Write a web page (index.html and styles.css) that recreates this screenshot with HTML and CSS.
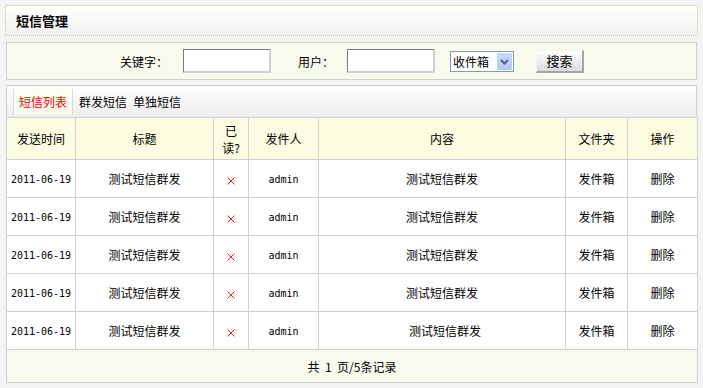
FILE: index.html
```html
<!DOCTYPE html>
<html>
<head>
<meta charset="utf-8">
<link rel="stylesheet" href="styles.css">
</head>
<body>
<div class="title">短信管理</div>
<div class="search">
  <span class="label">关键字：</span>
  <span class="input"></span>
  <span class="label user">用户：</span>
  <span class="input"></span>
  <span class="select"><span class="sel-text">收件箱</span><span class="sel-btn"><svg width="9" height="6" viewBox="0 0 9 6"><path d="M1 1 L4.5 4.5 L8 1" fill="none" stroke="#4d6185" stroke-width="2"/></svg></span></span>
  <span class="btn">搜索</span>
</div>
<div class="tabs">
  <span class="tab active">短信列表</span>
  <span class="tab">群发短信</span>
  <span class="tab">单独短信</span>
</div>
<table class="grid">
  <colgroup>
    <col class="c1"><col class="c2"><col class="c3"><col class="c4"><col class="c5"><col class="c6"><col class="c7">
  </colgroup>
  <thead>
    <tr><th>发送时间</th><th>标题</th><th>已<br>读?</th><th>发件人</th><th>内容</th><th>文件夹</th><th>操作</th></tr>
  </thead>
  <tbody>
    <tr><td class="mono">2011-06-19</td><td>测试短信群发</td><td><svg class="x" width="8" height="8" viewBox="0 0 8 8"><path d="M0.5 0.5 L7.5 7.5 M7.5 0.5 L0.5 7.5" stroke="#ff0000" stroke-width="0.9"/></svg></td><td class="mono">admin</td><td>测试短信群发</td><td>发件箱</td><td>删除</td></tr>
    <tr><td class="mono">2011-06-19</td><td>测试短信群发</td><td><svg class="x" width="8" height="8" viewBox="0 0 8 8"><path d="M0.5 0.5 L7.5 7.5 M7.5 0.5 L0.5 7.5" stroke="#ff0000" stroke-width="0.9"/></svg></td><td class="mono">admin</td><td>测试短信群发</td><td>发件箱</td><td>删除</td></tr>
    <tr><td class="mono">2011-06-19</td><td>测试短信群发</td><td><svg class="x" width="8" height="8" viewBox="0 0 8 8"><path d="M0.5 0.5 L7.5 7.5 M7.5 0.5 L0.5 7.5" stroke="#ff0000" stroke-width="0.9"/></svg></td><td class="mono">admin</td><td>测试短信群发</td><td>发件箱</td><td>删除</td></tr>
    <tr><td class="mono">2011-06-19</td><td>测试短信群发</td><td><svg class="x" width="8" height="8" viewBox="0 0 8 8"><path d="M0.5 0.5 L7.5 7.5 M7.5 0.5 L0.5 7.5" stroke="#ff0000" stroke-width="0.9"/></svg></td><td class="mono">admin</td><td>测试短信群发</td><td>发件箱</td><td>删除</td></tr>
    <tr><td class="mono">2011-06-19</td><td>测试短信群发</td><td><svg class="x" width="8" height="8" viewBox="0 0 8 8"><path d="M0.5 0.5 L7.5 7.5 M7.5 0.5 L0.5 7.5" stroke="#ff0000" stroke-width="0.9"/></svg></td><td class="mono">admin</td><td class="shift">测试短信群发</td><td>发件箱</td><td>删除</td></tr>
  </tbody>
  <tfoot>
    <tr><td colspan="7">共&nbsp;&nbsp;1&nbsp;&nbsp;页/5条记录</td></tr>
  </tfoot>
</table>
</body>
</html>
```
FILE: styles.css
```css
html, body {
  margin: 0;
  padding: 0;
  background: #f4f4f4;
}
body {
  padding-top: 5px;
  font-family: "Noto Sans CJK SC", "Liberation Sans", sans-serif;
  font-size: 12px;
  color: #000;
}
.title {
  margin: 0 5px;
  height: 29px;
  line-height: 29px;
  border: 1px dotted #c3cf7a;
  background: linear-gradient(#ffffff, #f0f0f0);
  padding-left: 10px;
  font-size: 13px;
  font-weight: bold;
}
.search {
  margin: 6px 6px 0;
  height: 36px;
  border: 1px solid #cfcfcf;
  background: #f9faee;
  display: flex;
  align-items: center;
  padding-left: 113px;
}
.label {
  width: 63px;
}
.label.user {
  margin-left: 27px;
  width: 49px;
}
.input {
  width: 85px;
  height: 21px;
  background: #fff;
  border-style: solid;
  border-width: 1px 2px 2px 1px;
  border-color: #7a7a7a #d0d0d0 #d0d0d0 #7a7a7a;
  box-sizing: content-box;
}
.select {
  margin-left: 15px;
  width: 60px;
  height: 19px;
  border: 1px solid #7f9db9;
  background: #fff;
  display: flex;
  align-items: center;
  justify-content: space-between;
  padding-left: 2px;
  box-sizing: content-box;
  margin-top: 1px;
}
.sel-text {
  line-height: 19px;
}
.sel-btn {
  width: 15px;
  height: 17px;
  margin-right: 1px;
  background: linear-gradient(#c9d8fc, #b0c6f6);
  border-radius: 1px;
  display: flex;
  align-items: center;
  justify-content: center;
}
.btn {
  margin-left: 22px;
  width: 45px;
  height: 20px;
  line-height: 20px;
  text-align: center;
  background: linear-gradient(#ffffff, #dcdcdc);
  border-style: solid;
  border-width: 1px 2px 2px 1px;
  border-color: #f4f4f4 #a5a5a5 #a5a5a5 #f4f4f4;
  font-size: 13px;
}
.tabs {
  margin: 5px 6px 0;
  height: 31px;
  border: 1px solid #cfcfcf;
  border-bottom: none;
  background: linear-gradient(#ffffff, #ededed);
  display: flex;
  align-items: flex-start;
  padding-left: 6px;
  gap: 6px;
}
.tab {
  margin-top: 3px;
  height: 25px;
  line-height: 25px;
}
.tab.active {
  color: #ff0000;
  background: #fbfbef;
  border-left: 1px solid #d8d8d8;
  border-right: 1px solid #d8d8d8;
  padding: 0 5px;
}
.grid {
  margin: 0 6px;
  width: 691px;
  border-collapse: collapse;
  table-layout: fixed;
  background: #fff;
}
.c1 { width: 69px; }
.c2 { width: 138px; }
.c3 { width: 35px; }
.c4 { width: 70px; }
.c5 { width: 247px; }
.c6 { width: 62px; }
.c7 { width: 70px; }
.grid th, .grid td {
  border: 1px solid #d0d0d0;
  text-align: center;
  padding: 0;
  font-weight: normal;
}
.grid thead tr {
  height: 42px;
}
.grid th {
  background: #fcfce0;
  line-height: 17px;
}
.grid tbody tr {
  height: 38px;
}
.grid td.mono {
  font-family: "DejaVu Sans Mono", monospace;
  font-size: 10px;
  padding-top: 1px;
}
.grid td.shift {
  padding-left: 6px;
}
.x {
  display: inline-block;
  vertical-align: middle;
}
.grid tfoot tr {
  height: 33px;
}
.grid tfoot td {
  background: #f9faee;
}
```
